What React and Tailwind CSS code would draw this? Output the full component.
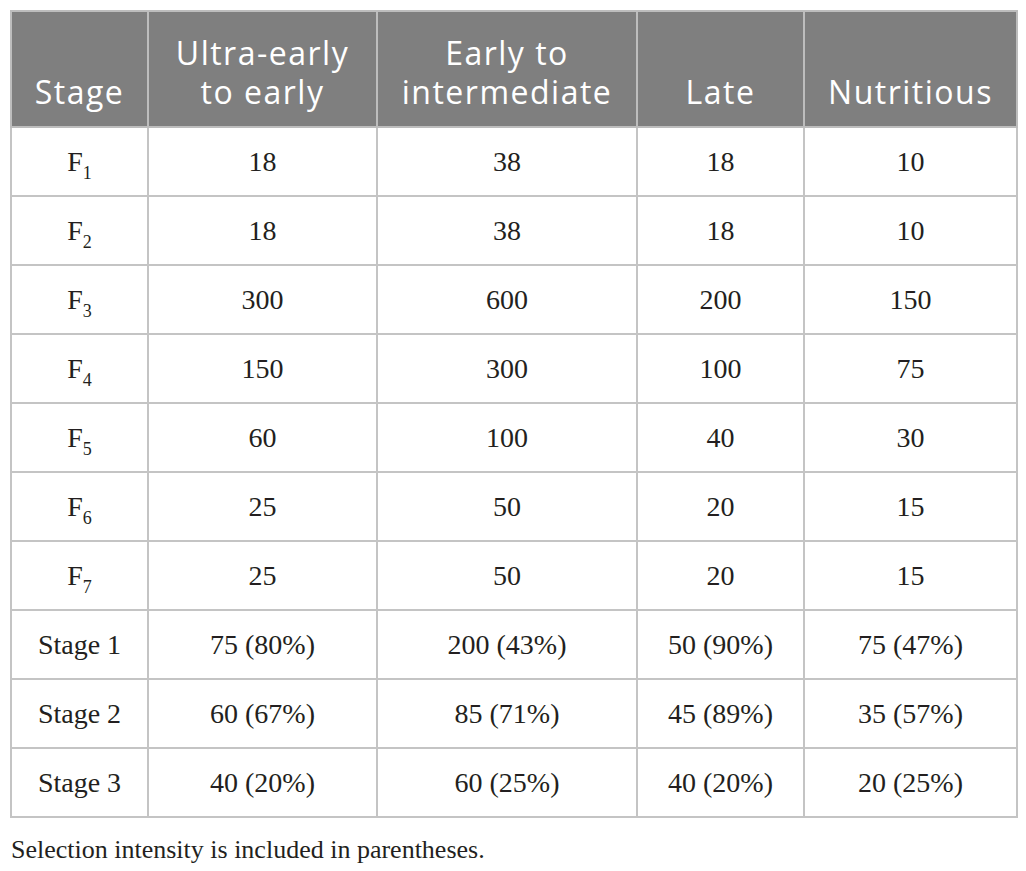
const rows = [
  ["F", "1", "18", "38", "18", "10"],
  ["F", "2", "18", "38", "18", "10"],
  ["F", "3", "300", "600", "200", "150"],
  ["F", "4", "150", "300", "100", "75"],
  ["F", "5", "60", "100", "40", "30"],
  ["F", "6", "25", "50", "20", "15"],
  ["F", "7", "25", "50", "20", "15"],
  ["Stage 1", null, "75 (80%)", "200 (43%)", "50 (90%)", "75 (47%)"],
  ["Stage 2", null, "60 (67%)", "85 (71%)", "45 (89%)", "35 (57%)"],
  ["Stage 3", null, "40 (20%)", "60 (25%)", "40 (20%)", "20 (25%)"],
];

const headers = [
  ["Stage"],
  ["Ultra-early", "to early"],
  ["Early to", "intermediate"],
  ["Late"],
  ["Nutritious"],
];

export default function App() {
  return (
    <div className="min-h-screen bg-white pt-[10px] pl-[10px]">
      <table className="border-collapse table-fixed w-[1006px]">
        <colgroup>
          <col className="w-[137px]" />
          <col className="w-[229px]" />
          <col className="w-[260px]" />
          <col className="w-[167px]" />
          <col className="w-[213px]" />
        </colgroup>
        <thead>
          <tr className="h-[116px]">
            {headers.map((lines, i) => (
              <th
                key={i}
                className="border-2 border-[#bdbdbd] bg-[#7f7f7f] text-white font-normal align-bottom text-center pb-[15px] text-[32px] tracking-[1.5px] leading-[39px] font-['Open_Sans',sans-serif]"
              >
                {lines.map((l) => (
                  <div key={l}>{l}</div>
                ))}
              </th>
            ))}
          </tr>
        </thead>
        <tbody className="font-['Liberation_Serif',serif] text-[28px] text-[#231f20]">
          {rows.map((r, i) => (
            <tr key={i} className="h-[69px]">
              <td className="border-2 border-[#c4c4c4] text-center align-middle">
                {r[0]}
                {r[1] && <sub className="text-[18px] align-[-0.2em]">{r[1]}</sub>}
              </td>
              {r.slice(2).map((v, j) => (
                <td key={j} className="border-2 border-[#c4c4c4] text-center align-middle">
                  {v}
                </td>
              ))}
            </tr>
          ))}
        </tbody>
      </table>
      <p className="mt-[12px] font-['Liberation_Serif',serif] text-[26px] text-[#231f20] pl-[1px]">
        Selection intensity is included in parentheses.
      </p>
    </div>
  );
}
